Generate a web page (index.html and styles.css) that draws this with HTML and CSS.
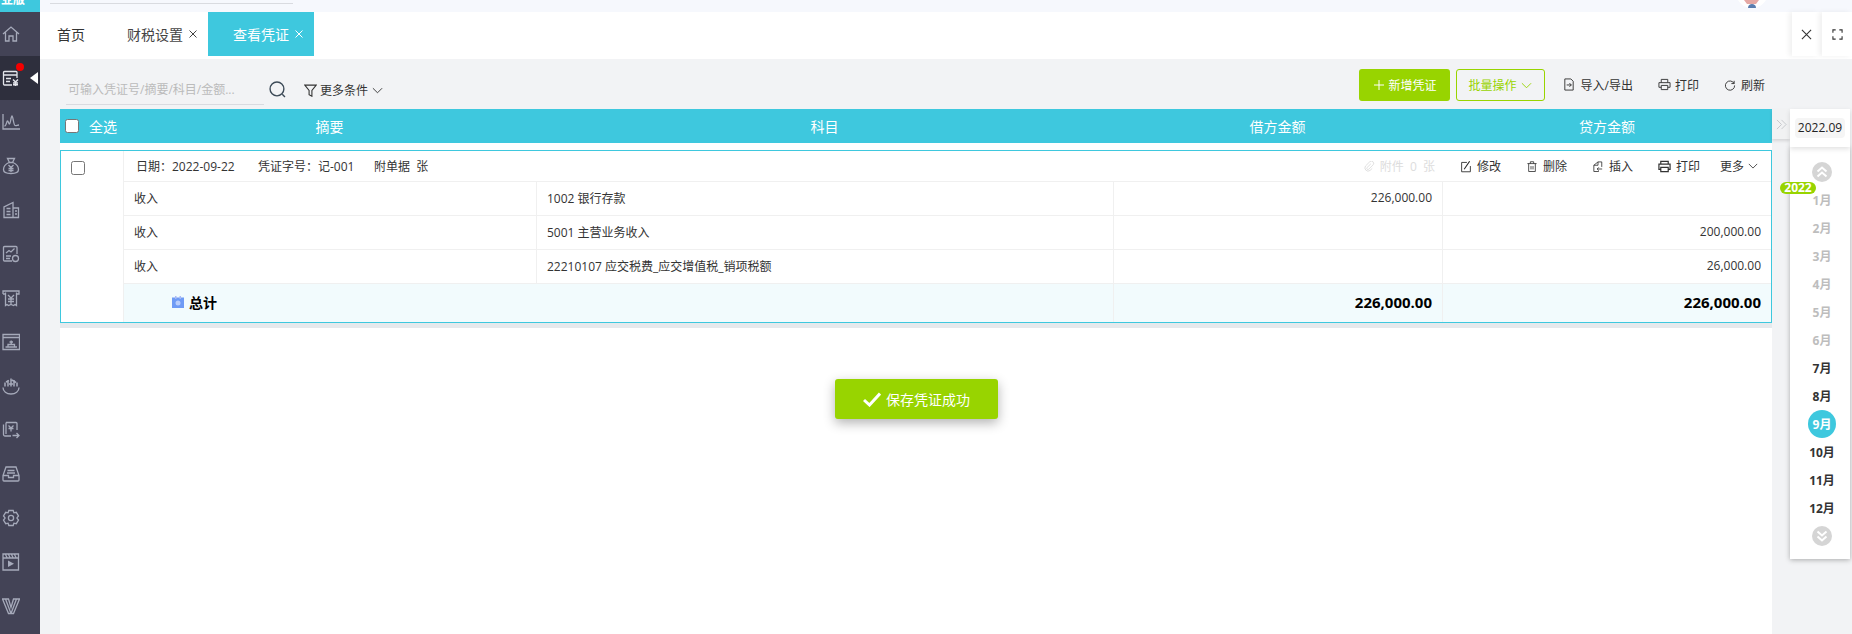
FILE: index.html
```html
<!DOCTYPE html>
<html lang="zh">
<head>
<meta charset="utf-8">
<title>查看凭证</title>
<link rel="stylesheet" href="styles.css">
</head>
<body>
<div class="app">
  <aside class="sidebar">
    <div class="logo"><span>专业版</span></div>
    <a class="nav"><svg viewBox="0 0 18 18"><path d="M1 9 9 2l8 7M3.5 7.5V16h3.500v-5h4v5h3.500V7.500"/></svg></a>
    <a class="nav active"><svg viewBox="0 0 18 18"><path d="M10 16H2.500a1 1 0 0 1-1-1V3.500a1 1 0 0 1 1-1h11.500a1 1 0 0 1 1 1V9M1.500 6h13.500M4 9.500h5M4 12.500h4"/><path class="thick" d="m11 10.500 2.500 2.500 2.500-2.500M13.500 13v4M11 14h5M11 15.800h5"/></svg><i class="dot"></i><i class="arrow"></i></a>
    <a class="nav"><svg viewBox="0 0 18 18"><path d="M1 1v15h17M2.500 13c2 0 2-5 3-5s1 3 2 3 1.500-8 2.500-8 1.500 9 3 9.500 2-.5 4-.5"/></svg></a>
    <a class="nav"><svg viewBox="0 0 18 18"><path d="M5.500 1.500h7l-2 4h-3zM7 5.500C3.500 7 1.500 10 1.500 12.500c0 3 2.500 4 7.500 4s7.500-1 7.500-4c0-2.500-2-5.500-5.500-7M6.500 8 9 10.500 11.500 8M9 10.500V15M6.500 11.500h5M6.500 13.500h5"/></svg></a>
    <a class="nav"><svg viewBox="0 0 18 18"><path d="M7 16.500H2V6l9-4.500v15H7zM11 7h5.500v9.500H11M4.500 7.500h4M4.500 10.500h4M4.500 13.500h4M13 10h2M13 13h2"/></svg></a>
    <a class="nav"><svg viewBox="0 0 18 18"><path d="M10 16H2.500a1 1 0 0 1-1-1V2.500a1 1 0 0 1 1-1H14a1 1 0 0 1 1 1V9M4 8l3-2.500 2 1.500 3.500-3.500M4 11h5M4 13.500h4"/><circle cx="13.500" cy="13.500" r="3"/></svg></a>
    <a class="nav"><svg viewBox="0 0 18 18"><path d="M1 5V2h16v3h-2.500M3.500 5H1M3.500 3.500V16.500l1.500-1 1.500 1 2.500-1 2.500 1 1.500-1 1.500 1V3.500M6 6l3 3 3-3M9 9v6M6 10h6M6 12.500h6"/></svg></a>
    <a class="nav"><svg viewBox="0 0 18 18"><path d="M1 1.500h16.500v15H1zM1 4.500h16.500M3.500 14h11.500M6 14v-2.500h6.500V14M9.200 11.500V7.500M7.500 9h3.500"/></svg></a>
    <a class="nav"><svg viewBox="0 0 18 18"><path d="M1 10.500c0 4 3.500 6.500 8 6.500s8-2.500 8-6.500"/><path class="thick" d="M3 9.500V5.500M6 9.500V3M9 9.500V1.500M12 9.500V3M15 9.500V5.500M4 5l3-1.500M10 3l4 2.500M7 7h4"/></svg></a>
    <a class="nav"><svg viewBox="0 0 18 18"><path d="M9 15H3a1.500 1.500 0 0 1-1.500-1.500V3.500M4 1.500h10a1 1 0 0 1 1 1V9M4 1.500V13M6.500 4.500 9 7l2.500-2.500M9 7v3.500M6.500 7.500h5M10.500 14.500H17M14.500 12l2.500 2.500-2.500 2.500"/></svg></a>
    <a class="nav"><svg viewBox="0 0 18 18"><path d="M4 2h10l3 8.500V15a1 1 0 0 1-1 1H2a1 1 0 0 1-1-1v-4.500zM1 10.500h5.500v2h5v-2H17M5.500 5.500h7M5 8h8"/></svg></a>
    <a class="nav"><svg viewBox="0 0 18 18"><path d="M6.800 1.500h4.400l.7 2.300 2.400-.5 2.200 3.700L15 8.800v.4l1.500 1.800-2.200 3.700-2.400-.5-.7 2.300H6.800l-.7-2.300-2.400.5L1.500 11 3 9.200v-.4L1.500 7l2.200-3.700 2.400.5z"/><circle cx="9" cy="9" r="2.600"/></svg></a>
    <a class="nav"><svg viewBox="0 0 18 18"><path d="M1 1h15.500v16H1zM1 5h15.500M3.500 1.500 5 4.500M6.500 1.500 8 4.500M9.500 1.500 11 4.500M12.500 1.500 14 4.500"/><path class="solid" d="M6 7.500v6.500l6-3.200z"/></svg></a>
    <a class="nav"><svg viewBox="0 0 18 18"><path d="M.5 2h6L9 10.500 11.500 2h6L11.500 16.500h-5zM3.500 2 9 16.500M14.500 2 9 16.500"/></svg></a>
  </aside>

  <div class="main">
    <header class="topbar">
      <div class="topline"></div>
      <svg class="avatar" viewBox="0 0 30 8"><path class="av-face" d="M1 0h28c-3 5-8 8-14 8S4 5 1 0z"/><path class="av-red" d="M7 0h15l-3 4h-9z"/><path class="av-blue" d="M11 8c0-3 2-4 4-4s4 1 4 4z"/></svg>
    </header>

    <nav class="tabbar">
      <a class="tab tab-home">首页</a>
      <a class="tab tab-plain">财税设置<svg class="tab-x" viewBox="0 0 8 8"><path d="m.5.5 7 7M7.500.5l-7 7"/></svg></a>
      <a class="tab tab-active">查看凭证<svg class="tab-x" viewBox="0 0 8 8"><path d="m.5.5 7 7M7.500.5l-7 7"/></svg></a>
      <div class="window-btns">
        <button class="win-btn"><svg viewBox="0 0 12 12"><path d="M1 1l10 10M11 1 1 11"/></svg></button>
        <button class="win-btn win-full"><svg viewBox="0 0 12 12"><path d="M1 4V1h3M8 1h3v3M11 8v3H8M4 11H1V8"/></svg></button>
      </div>
    </nav>

    <div class="workspace">
      <section class="center">
        <div class="toolbar">
          <div class="search"><span class="placeholder">可输入凭证号/摘要/科目/金额...</span></div>
          <svg class="ic-search" viewBox="0 0 16 16"><circle cx="7.500" cy="7.500" r="6.500"/><path d="m12.500 12.500 2.500 2.500"/></svg>
          <div class="more-cond">
            <svg class="ic-filter" viewBox="0 0 12 12"><path d="M.7 1h10.600L7.300 6v5.300L4.700 9.800V6z"/></svg>
            <span>更多条件</span>
            <svg class="chev" viewBox="0 0 12 7"><path d="m1 1 5 5 5-5"/></svg>
          </div>
          <div class="tools">
            <button class="btn-add"><svg class="plus" viewBox="0 0 10 10"><path d="M5 0v10M0 5h10"/></svg>新增凭证</button>
            <button class="btn-batch">批量操作<svg class="chev chev-green" viewBox="0 0 12 7"><path d="m1 1 5 5 5-5"/></svg></button>
            <a class="tool tool-io"><svg viewBox="0 0 12 14"><path d="M8 1H1.500v12h9V3.500zM3.500 7.500h5M6.500 5.500l2 2-2 2"/></svg>导入/导出</a>
            <a class="tool tool-print"><svg viewBox="0 0 14 14"><path d="M3.500 5V1.500h7V5M3.500 10H1V5h12v5h-2.500M3.500 8h7v4.500h-7z"/></svg>打印</a>
            <a class="tool tool-refresh"><svg viewBox="0 0 13 13"><path d="M11 2.500v3H8M11 5.500a5 5 0 1 0 .5 2"/></svg>刷新</a>
          </div>
        </div>

        <div class="grid-head">
          <label class="select-all"><input class="box" type="checkbox"><span>全选</span></label>
          <div class="hcell">摘要</div>
          <div class="hcell">科目</div>
          <div class="hcell">借方金额</div>
          <div class="hcell">贷方金额</div>
        </div>

        <div class="sheet">
          <article class="card">
            <div class="card-check"><input class="box" type="checkbox"></div>
            <div class="card-body">
              <div class="info">
                <span class="info-date">日期：2022-09-22</span>
                <span class="info-no">凭证字号：记-001</span>
                <span class="info-att">附单据&nbsp;&nbsp;张</span>
                <div class="actions">
                  <a class="act act-attach"><svg viewBox="0 0 12 12"><path d="M7.500 3 3.200 7.300a1.300 1.300 0 0 0 1.800 1.800l5-5a2.500 2.500 0 0 0-3.500-3.500L1.700 5.400A3.500 3.500 0 0 0 6.600 10.300L9 8"/></svg>附件 0 张</a>
                  <a class="act act-edit"><svg viewBox="0 0 11 13"><path d="M6.500 2H.7v10.300h9.600V6"/><path class="ink" d="M9.500.7 3.500 9.500"/></svg>修改</a>
                  <a class="act act-del"><svg viewBox="0 0 12 13"><path d="M.5 3h11M2 3v9.500h8V3M4 3V.8h4V3M4.800 6v4M7.200 6v4"/></svg>删除</a>
                  <a class="act act-ins"><svg viewBox="0 0 12 13"><path d="M6 1h4.500v6M6 1 1 5v7.500h6M6 1v4H1M11 9.500H5M7 7.500l-2 2 2 2"/></svg>插入</a>
                  <a class="act act-print"><svg viewBox="0 0 14 13"><path d="M3 4V1h8v3M3 9.500H1V4h12v5.500h-2M3 7.500h8V12H3z"/></svg>打印</a>
                  <a class="act act-more">更多<svg class="chev" viewBox="0 0 12 7"><path d="m1 1 5 5 5-5"/></svg></a>
                </div>
              </div>
              <div class="row">
                <div class="cell">收入</div>
                <div class="cell">1002 银行存款</div>
                <div class="cell num">226,000.00</div>
                <div class="cell num"></div>
              </div>
              <div class="row">
                <div class="cell">收入</div>
                <div class="cell">5001 主营业务收入</div>
                <div class="cell num"></div>
                <div class="cell num">200,000.00</div>
              </div>
              <div class="row">
                <div class="cell">收入</div>
                <div class="cell">22210107 应交税费_应交增值税_销项税额</div>
                <div class="cell num"></div>
                <div class="cell num">26,000.00</div>
              </div>
              <div class="row row-total">
                <div class="cell cell-total"><svg class="ic-total" viewBox="0 0 12 12"><path class="cal" d="M0 1.500h12V12H0z"/><path class="cal-top" d="M3 0h1.500v3H3zM7.500 0H9v3H7.500z"/><circle class="cal-dot" cx="6" cy="7" r="2.500"/></svg>总计</div>
                <div class="cell num total-num">226,000.00</div>
                <div class="cell num total-num">226,000.00</div>
              </div>
            </div>
          </article>
          <div class="band"></div>
        </div>
      </section>

      <aside class="side">
        <a class="handle"><svg viewBox="0 0 12 12"><path d="m1 1 5 5-5 5M6 1l5 5-5 5"/></svg></a>
        <div class="side-col">
          <div class="cur-date"><span>2022.09</span></div>
          <div class="months">
            <span class="year-badge">2022</span>
            <a class="round"><svg viewBox="0 0 12 12"><path d="m1.500 5.500 4.500-4 4.500 4M1.500 10.500l4.500-4 4.500 4"/></svg></a>
            <a class="month off">1月</a>
            <a class="month off">2月</a>
            <a class="month off">3月</a>
            <a class="month off">4月</a>
            <a class="month off">5月</a>
            <a class="month off">6月</a>
            <a class="month">7月</a>
            <a class="month">8月</a>
            <a class="month on"><span>9月</span></a>
            <a class="month">10月</a>
            <a class="month">11月</a>
            <a class="month">12月</a>
            <a class="round"><svg viewBox="0 0 12 12"><path d="m1.500 1.500 4.500 4 4.500-4M1.500 6.500l4.500 4 4.500-4"/></svg></a>
          </div>
        </div>
      </aside>
    </div>
  </div>

  <div class="toast"><svg viewBox="0 0 18 15"><path d="M1 8l5.500 5L17 1.500"/></svg>保存凭证成功</div>
</div>
</body>
</html>
```

FILE: styles.css
```css
* { box-sizing: border-box; }
html, body { margin: 0; height: 100%; overflow: hidden; }
body {
  font-family: "Open Sans", "Noto Sans CJK SC", sans-serif;
  font-size: 12px;
  color: #333;
  background: #fff;
}
a { color: inherit; text-decoration: none; }
button { font: inherit; border: 0; padding: 0; cursor: pointer; }
svg { display: block; fill: none; stroke: currentColor; }

.app { display: flex; height: 634px; overflow: hidden; position: relative; }

/* sidebar */
.sidebar { width: 40px; flex: none; background: #434356; color: #a6aaba; }
.logo { height: 12px; overflow: hidden; background: #3ec8de; color: #fff; font-weight: 700; font-size: 12px; line-height: 12px; }
.logo span { display: block; margin: -6px 0 0 -11px; white-space: nowrap; }
.nav { position: relative; display: flex; align-items: center; height: 44px; padding-left: 2px; }
.nav svg { width: 18px; height: 18px; stroke-width: 1.300; }
.nav .thick { stroke-width: 1.500; }
.nav .solid { fill: currentColor; stroke: none; }
.nav.active { background: #2e2f3d; color: #e4e6ec; }
.dot { position: absolute; left: 16px; top: 7px; width: 8px; height: 8px; border-radius: 50%; background: #f40000; }
.arrow { position: absolute; left: 30px; top: 16px; border: 6px solid transparent; border-left: 0; border-right: 8px solid #fff; }

/* main */
.main { flex: 1; min-width: 0; display: flex; flex-direction: column; }
.topbar { height: 12px; flex: none; background: #f6f8fd; display: flex; overflow: hidden; }
.topline { width: 243px; height: 1px; margin: 3px 0 0 10px; background: #d9dbe0; }
.avatar { width: 30px; height: 8px; margin-left: auto; margin-right: 85px; }
.avatar path { stroke: none; }
.av-face { fill: #fff; }
.av-red { fill: #e5a8a4; }
.av-blue { fill: #5a7cae; }

.tabbar { height: 47px; flex: none; background: #fff; display: flex; align-items: flex-start; font-size: 14px; }
.tab { height: 44px; display: flex; align-items: center; flex: none; }
.tab-home { width: 87px; padding-left: 17px; color: #333; }
.tab-plain { width: 81px; color: #444; }
.tab-active { width: 106px; padding-left: 25px; background: #3ec8de; color: #fff; }
.tab-x { width: 8px; height: 8px; margin-left: 6px; stroke-width: 1; }
.window-btns { margin-left: auto; display: flex; gap: 2px; }
.win-btn { width: 28px; height: 44px; background: #fff; display: flex; align-items: center; justify-content: center; color: #333; box-shadow: -3px 0 5px rgba(0,0,0,.06); }
.win-full { width: 30px; }
.win-btn svg { width: 11px; height: 11px; stroke-width: 1.200; }

.workspace { flex: 1; min-height: 0; display: flex; padding-left: 20px; background: #f2f3f5; }
.center { width: 1712px; flex: none; display: flex; flex-direction: column; }

/* toolbar */
.toolbar { height: 50px; flex: none; display: flex; align-items: flex-start; color: #333; }
.search { width: 198px; height: 46px; margin-left: 6px; padding: 22px 0 0 2px; border-bottom: 1px solid #d9dbe0; }
.placeholder { display: block; color: #bbb; line-height: 17px; white-space: nowrap; }
.ic-search { width: 17px; height: 17px; margin: 22px 0 0 5px; color: #3c4a57; stroke-width: 1.300; }
.more-cond { display: flex; align-items: center; height: 20px; margin: 21px 0 0 18px; }
.ic-filter { width: 13px; height: 13px; margin-right: 3px; stroke-width: 1; color: #333; }
.chev { width: 11px; height: 7px; margin-left: 4px; stroke-width: 1; }
.tools { margin-left: auto; display: flex; align-items: center; height: 32px; margin-top: 10px; }
.btn-add { width: 91px; height: 32px; border-radius: 3px; background: #98d400; color: #fff; display: flex; align-items: center; padding-left: 15px; }
.plus { width: 10px; height: 10px; margin-right: 5px; stroke-width: 1; }
.btn-batch { width: 89px; height: 32px; margin-left: 6px; border: 1px solid #98d400; border-radius: 3px; background: transparent; color: #98d400; display: flex; align-items: center; justify-content: center; }
.chev-green { margin-left: 4px; color: #98d400; }
.tool { display: flex; align-items: center; flex: none; color: #333; padding-bottom: 1px; }
.tool svg { width: 12px; height: 13px; margin-right: 6px; stroke-width: 1; }
.tool-io { margin-left: 18px; }
.tool-print { margin-left: 25px; }
.tool-print svg { width: 13px; margin-right: 4px; }
.tool-refresh { margin-left: 25px; margin-right: 7px; }
.tool-refresh svg { margin-right: 5px; }

/* grid head */
.grid-head, .row { display: grid; }
.grid-head { height: 34px; flex: none; grid-template-columns: 63px 413px 577px 329px 1fr; background: #3ec8de; color: #fff; font-size: 14px; align-items: center; }
.select-all { display: flex; align-items: center; padding-left: 5px; }
.select-all span { margin-left: 10px; white-space: nowrap; }
.hcell { text-align: center; }
.box { appearance: none; width: 14px; height: 14px; margin: 0; flex: none; background: #fff; border: 1px solid #767676; border-radius: 2.500px; }

/* sheet */
.sheet { flex: 1; background: #fff; padding-top: 7px; }
.card { height: 173px; display: flex; border: 1px solid #3ec8de; }
.card-check { width: 62px; flex: none; padding: 10px 0 0 10px; }
.card-body { flex: 1; min-width: 0; border-left: 1px solid #f0f0f0; display: flex; flex-direction: column; }
.info { height: 31px; flex: none; display: flex; align-items: center; border-bottom: 1px solid #f0f0f0; padding-left: 12px; color: #333; }
.info-date { width: 122px; }
.info-no { width: 116px; }
.actions { margin-left: auto; display: flex; align-items: center; padding-right: 13px; }
.act { display: flex; align-items: center; }
.act svg { width: 10px; height: 13px; margin-right: 6px; stroke-width: 1; }
.act-attach { color: #ddd; word-spacing: 3px; }
.act-attach svg { width: 11px; height: 11px; margin-right: 5px; }
.act-edit svg .ink { stroke: #222; stroke-width: 1.200; }
.act-edit, .act-del, .act-ins { margin-left: 26px; }
.act-print { margin-left: 25px; }
.act-print svg { width: 13px; margin-right: 5px; stroke-width: 1.300; }
.act-more { margin-left: 20px; }
.act .chev { width: 10px; height: 6px; margin: 0 0 0 4px; }

.row { height: 34px; flex: none; grid-template-columns: 413px 577px 329px 1fr; border-bottom: 1px solid #f0f0f0; }
.cell { display: flex; align-items: center; padding: 0 10px 2px; border-right: 1px solid #f0f0f0; min-width: 0; white-space: nowrap; }
.cell:last-child { border-right: 0; }
.num { justify-content: flex-end; }
.row-total { height: auto; flex: 1; grid-template-columns: 990px 329px 1fr; background: #f2fbfd; border-bottom: 0; font-size: 14px; font-weight: 700; color: #000; }
.cell-total { padding-left: 48px; }
.total-num { font-size: 15px; }
.ic-total { width: 12px; height: 12px; margin-right: 5px; }
.ic-total path, .ic-total circle { stroke: none; }
.cal { fill: #6f9bf5; }
.cal-top { fill: #a9b8f5; }
.cal-dot { fill: #b9cdfb; }
.band { height: 5px; background: #e6e9ec; }

/* right side */
.side { flex: none; width: 80px; display: flex; align-items: flex-start; padding-top: 50px; }
.handle { width: 18px; height: 30px; flex: none; display: flex; align-items: center; justify-content: center; background: #f1f2f3; color: #c4c6ca; box-shadow: 0 2px 3px rgba(0,0,0,.12); }
.handle svg { width: 11px; height: 11px; stroke-width: 1; }
.side-col { width: 60px; flex: none; }
.cur-date { position: relative; z-index: 1; height: 38px; display: flex; align-items: center; justify-content: center; background: #fff; color: #222; box-shadow: 0 2px 5px rgba(0,0,0,.12); }
.cur-date span { width: 50px; height: 20px; border-radius: 4px; background: #f5f5f5; text-align: center; line-height: 20px; }
.months { position: relative; padding: 15px 0 13px 4px; background: #fff; box-shadow: 0 1px 5px rgba(0,0,0,.3); display: flex; flex-direction: column; align-items: center; }
.round { width: 20px; height: 20px; border-radius: 50%; background: #d5d5d5; color: #fff; display: flex; align-items: center; justify-content: center; margin: 0 0 4px; }
.month + .round { margin: 4px 0 0; }
.round svg { width: 12px; height: 12px; stroke-width: 2; }
.month { width: 100%; height: 28px; display: flex; align-items: center; justify-content: center; font-weight: 700; color: #333; }
.month.off { color: #bdbdbd; }
.month.on span { width: 28px; height: 28px; border-radius: 50%; background: #3ec8de; color: #fff; display: flex; align-items: center; justify-content: center; }
.year-badge { position: absolute; left: -10px; top: 35px; width: 36px; height: 12px; border-radius: 6px; background: #98d400; color: #fff; font-weight: 700; font-size: 12px; line-height: 12px; text-align: center; }

/* toast */
.toast { position: absolute; left: 835px; top: 379px; width: 163px; height: 40px; padding-left: 28px; border-radius: 3px; background: #98d400; color: #fff; font-size: 14px; display: flex; align-items: center; box-shadow: 0 4px 12px rgba(0,0,0,.3); }
.toast svg { width: 18px; height: 15px; margin-right: 5px; stroke-width: 3; color: #fff; }
```
